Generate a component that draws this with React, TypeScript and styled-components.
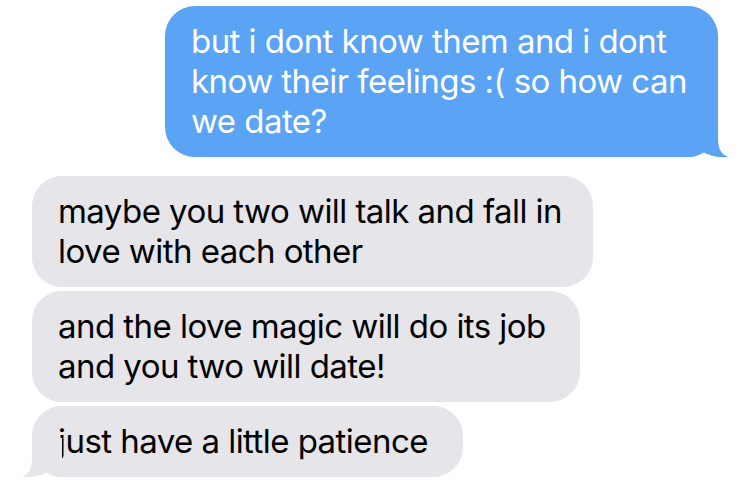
import React from 'react'
import styled, {createGlobalStyle} from 'styled-components'

const GlobalStyle = createGlobalStyle`
    html, body {
        margin: 0;
        padding: 0;
        background: #ffffff;
    }
    body {
        font-family: Inter, "Liberation Sans", Arial, sans-serif;
        -webkit-font-smoothing: antialiased;
    }
`

const Thread = styled.div`
    display: flex;
    flex-direction: column;
    width: 750px;
    height: 487px;
    padding: 6px 32px 0 32px;
    box-sizing: border-box;
    overflow: hidden;
`

const Group = styled.div<{side: 'sent' | 'received'}>`
    display: flex;
    flex-direction: column;
    align-items: ${props => props.side === 'sent' ? 'flex-end' : 'flex-start'};
    gap: 4px;
    margin-bottom: 19px;
`

const Bubble = styled.div<{sent?: boolean; width: number}>`
    position: relative;
    width: ${props => props.width}px;
    box-sizing: border-box;
    padding: 15px 20px 16px 26px;
    border-radius: 30px;
    background: ${props => props.sent ? '#5aa3f5' : '#e5e5ea'};
    color: ${props => props.sent ? '#ffffff' : '#000000'};
    font-size: 33px;
    line-height: 40px;
    letter-spacing: -0.55px;
    white-space: nowrap;
`

const Tail = styled.svg<{sent?: boolean}>`
    position: absolute;
    bottom: -1px;
    width: 40px;
    height: 40px;
    ${props => props.sent ? 'right: -10px;' : 'left: -10px; transform: scaleX(-1);'}
    fill: ${props => props.sent ? '#5aa3f5' : '#e5e5ea'};
`

const BubbleTail = ({sent}: {sent?: boolean}) => (
  <Tail sent={sent} viewBox="0 0 40 40">
    <path d="M 10 0 L 30 0 L 30 20 C 30 31 33 36 40 39 C 31 40 22 38 15 34 C 11 37 6 39 0 39 L 0 0 Z" />
  </Tail>
)

const messages = {
  sent: [
    {width: 553, lines: ['but i dont know them and i dont', 'know their feelings :( so how can', 'we date?']}
  ],
  received: [
    {width: 561, lines: ['maybe you two will talk and fall in', 'love with each other']},
    {width: 548, lines: ['and the love magic will do its job', 'and you two will date!']},
    {width: 431, lines: ['just have a little patience']}
  ]
}

const renderLines = (lines: string[]) =>
  lines.map((line, i) => (
    <React.Fragment key={i}>
      {line}
      {i < lines.length - 1 && <br />}
    </React.Fragment>
  ))

const App = () => {
  return (
    <>
      <GlobalStyle />
      <Thread>
        <Group side="sent">
          {messages.sent.map((m, i) => (
            <Bubble key={i} sent width={m.width}>
              {renderLines(m.lines)}
              {i === messages.sent.length - 1 && <BubbleTail sent />}
            </Bubble>
          ))}
        </Group>
        <Group side="received">
          {messages.received.map((m, i) => (
            <Bubble key={i} width={m.width}>
              {renderLines(m.lines)}
              {i === messages.received.length - 1 && <BubbleTail />}
            </Bubble>
          ))}
        </Group>
      </Thread>
    </>
  )
}

export default App
